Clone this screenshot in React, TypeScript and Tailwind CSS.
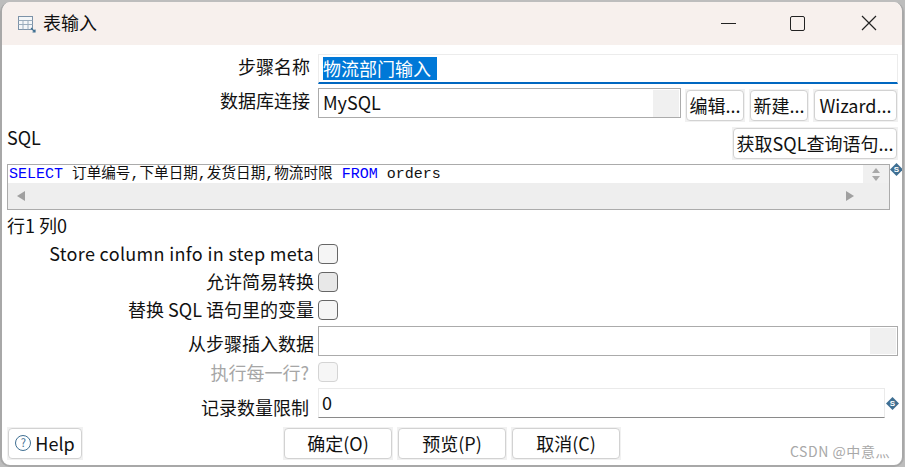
const FONT = "font-['Noto_Sans_CJK_SC','Noto_Sans',sans-serif]";

function VarIcon() {
  return (
    <svg width="13" height="13" viewBox="0 0 13 13" className="shrink-0">
      <path d="M6.5 0 L13 6.5 L6.5 13 L0 6.5 Z" fill="#3f6f92" />
      <text x="6.5" y="9.3" textAnchor="middle" fontSize="8" fontWeight="700" fill="#fff" fontFamily="Liberation Sans, sans-serif">S</text>
    </svg>
  );
}

function Label({ children, className = "" }: { children: React.ReactNode; className?: string }) {
  return <div className={`w-[307px] text-right text-[18px] leading-[24px] text-[#111] shrink-0 whitespace-nowrap ${className}`}>{children}</div>;
}

function Check({ disabled, shade }: { disabled?: boolean; shade?: boolean }) {
  return (
    <span
      className={`w-5 h-5 rounded-[4px] border shrink-0 ${
        disabled ? "border-[#d4d4d4] bg-[#f6f6f6]" : shade ? "border-[#666] bg-[#e8e8e8]" : "border-[#666] bg-[#f5f5f5]"
      }`}
    />
  );
}

function Btn({ children, className = "" }: { children: React.ReactNode; className?: string }) {
  return (
    <div className={`bg-[#f1f1f1] p-px shrink-0 ${className}`}>
      <div className="h-full w-full flex items-center justify-center pb-[2px] bg-white border border-[#d2d2d2] rounded-[4px] text-[18px] leading-[24px] text-[#111] whitespace-nowrap">
        {children}
      </div>
    </div>
  );
}

function CheckRow({ label, shade, className = "" }: { label: string; shade?: boolean; className?: string }) {
  return (
    <div className="flex items-center h-5 mb-2">
      <Label className={`pb-[2px] ${className}`}>{label}</Label>
      <span className="w-1" />
      <Check shade={shade} />
    </div>
  );
}

export default function App() {
  return (
    <div className={`w-[905px] h-[467px] bg-[#bdbdbd] overflow-hidden ${FONT}`}>
      <div className="w-[904px] h-[465px] mt-[2px] bg-white rounded-[10px] overflow-hidden border-l-[2px] border-r-[2px] border-b-[2px] border-[#a8a8a8]">
        {/* title bar */}
        <div className="h-[43px] bg-[#f7f0ed] flex items-center">
          <svg width="20" height="20" viewBox="0 0 20 20" className="ml-[15px]">
            <rect x="1.5" y="2.5" width="14" height="13" fill="#f4f6f8" stroke="#7c92a8" />
            <path d="M1.5 6.5H15.5M1.5 10.5H15.5M6 6.5V15.5M11 6.5V15.5" stroke="#9aacbc" fill="none" />
            <path d="M14 14l4 4M18 15.5V18H15.5" stroke="#3f6f92" fill="none" strokeWidth="1.2" />
          </svg>
          <span className="ml-[6px] pb-[3px] text-[18px] leading-[24px] text-[#111]">表输入</span>
          <div className="ml-auto flex items-center pb-px">
            <span className="w-[15px] h-px bg-[#222] mr-[54px]" />
            <span className="w-[15px] h-[15px] border-[1.5px] border-[#222] rounded-[2px] mr-[56px]" />
            <svg width="16" height="16" viewBox="0 0 16 16" className="mr-[25px]">
              <path d="M1 1L15 15M15 1L1 15" stroke="#222" strokeWidth="1.2" fill="none" />
            </svg>
          </div>
        </div>

        <div className="relative pl-[5px] h-[420px]">
          {/* step name */}
          <div className="flex pt-[9px] h-[43px]">
            <div className="w-[303px] text-right text-[18px] leading-[24px] text-[#111]">步骤名称</div>
            <div className="ml-[8px] w-[580px] h-[30px] border border-[#ececec] border-b-[2px] border-b-[#0067c0] flex items-center pl-1">
              <span className="bg-[#0078d7] text-white text-[18px] leading-[23px] pr-[6px]">物流部门输入</span>
            </div>
          </div>

          {/* connection */}
          <div className="flex h-[39px]">
            <div className="w-[303px] text-right text-[18px] leading-[24px] text-[#111]">数据库连接</div>
            <div className="ml-[8px] w-[363px] h-[30px] border border-[#ababab] flex items-center pl-1 pr-px text-[18px] leading-[24px] text-[#111]">
              <span className="pb-[3px]">MySQL</span>
              <span className="ml-auto w-[26px] h-[27px] bg-[#f0f0f0]" />
            </div>
            <Btn className="ml-[4px] mt-px w-[60px] h-[33px]">编辑...</Btn>
            <Btn className="ml-[4px] mt-px w-[60px] h-[33px]">新建...</Btn>
            <Btn className="ml-[4px] mt-px w-[85px] h-[33px]">Wizard...</Btn>
          </div>

          {/* SQL label */}
          <div className="flex h-[37px]">
            <div className="text-[18px] leading-[20px] text-[#111]">SQL</div>
            <Btn className="ml-auto mr-[4px] w-[166px] h-[33px]">获取SQL查询语句...</Btn>
          </div>

          {/* editor */}
          <div className="flex items-start h-[46px]">
            <div className="w-[883px] h-[46px] shrink-0 border border-[#ababab] flex flex-col">
              <div className="h-[18px] flex items-center">
                <span className="pl-px text-[15px] leading-[18px] whitespace-pre text-[#111] font-['Liberation_Mono','Noto_Sans_CJK_SC',monospace]">
                  <span className="text-[#0000ff]">SELECT</span> <span className="text-[14.6px]">订单编号</span>,<span className="text-[14.6px]">下单日期</span>,<span className="text-[14.6px]">发货日期</span>,<span className="text-[14.6px]">物流时限</span> <span className="text-[#0000ff]">FROM</span> orders
                </span>
                <span className="ml-auto w-[26px] h-[18px] bg-[#f0f0f0] flex flex-col items-center justify-center gap-[3px]">
                  <span className="w-0 h-0 border-x-[4px] border-x-transparent border-b-[5px] border-b-[#a8a8a8]" />
                  <span className="w-0 h-0 border-x-[4px] border-x-transparent border-t-[5px] border-t-[#a8a8a8]" />
                </span>
              </div>
              <div className="flex-1 bg-[#eeeeee] flex items-center justify-between px-[9px]">
                <span className="w-0 h-0 border-y-[5px] border-y-transparent border-r-[8px] border-r-[#a0a0a0]" />
                <span className="w-0 h-0 mr-[26px] border-y-[5px] border-y-transparent border-l-[8px] border-l-[#a0a0a0]" />
              </div>
            </div>
            <span className="-mt-[1px] shrink-0"><VarIcon /></span>
          </div>

          {/* caret position */}
          <div className="h-[34px] pt-[3px] text-[18px] leading-[24px] text-[#111]">行1 列0</div>

          <CheckRow label="Store column info in step meta" className="tracking-[0.33px]" />
          <CheckRow label="允许简易转换" shade />
          <CheckRow label="替换 SQL 语句里的变量" />

          {/* insert from step */}
          <div className="flex items-center h-[30px] mt-[-2px]">
            <Label className="pt-1">从步骤插入数据</Label>
            <span className="w-1" />
            <div className="w-[580px] h-[30px] border border-[#ababab] flex justify-end p-px">
              <span className="w-[26px] bg-[#f0f0f0]" />
            </div>
          </div>

          {/* per row */}
          <div className="flex items-center h-5 mt-[6px]">
            <div className="w-[302px] text-right text-[18px] leading-[24px] text-[#a6a6a6] shrink-0">执行每一行?</div>
            <span className="w-[9px]" />
            <Check disabled />
          </div>

          {/* limit */}
          <div className="flex h-[30px] mt-[6px]">
            <div className="w-[302px] text-right text-[18px] leading-[24px] pt-[7px] text-[#111] shrink-0">记录数量限制</div>
            <div className="ml-[9px] w-[567px] h-[30px] border border-[#eaeaea] border-b-[#8a8a8a] flex items-center pl-[3px] pb-[3px] text-[18px] leading-[24px] text-[#111]">0</div>
            <span className="ml-[1px] self-center"><VarIcon /></span>
          </div>

          {/* footer */}
          <div className="flex mt-[9px] h-[33px]">
            <Btn className="w-[76px] h-[33px]">
              <span className="flex items-center gap-1">
                <span className="w-4 h-4 rounded-full border-[1.5px] border-[#3f6f92] flex items-center justify-center text-[11px] leading-none text-[#3f6f92]">?</span>
                Help
              </span>
            </Btn>
            <Btn className="ml-[200px] w-[110px] h-[33px]">确定(O)</Btn>
            <Btn className="ml-[4px] w-[110px] h-[33px]">预览(P)</Btn>
            <Btn className="ml-[4px] w-[110px] h-[33px]">取消(C)</Btn>
          </div>

          {/* csdn watermark sits over the window */}
          <span className="absolute right-[12px] bottom-[5px] text-[14px] tracking-[0.55px] leading-[18px] text-[#a8a8a8]">CSDN @中意灬</span>
        </div>
      </div>
    </div>
  );
}
